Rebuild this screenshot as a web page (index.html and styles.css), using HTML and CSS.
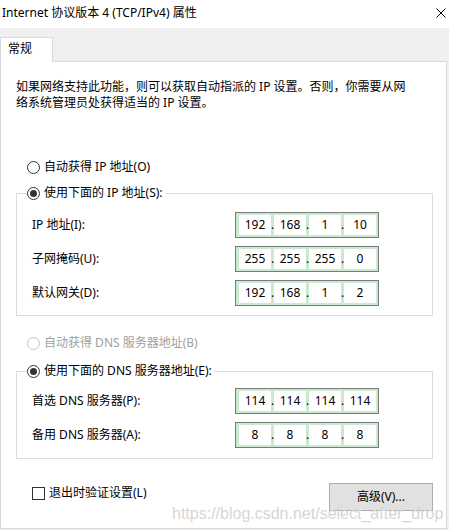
FILE: index.html
```html
<!DOCTYPE html>
<html lang="zh-CN">

<head>
    <meta charset="UTF-8" />
    <meta name="viewport" content="width=device-width, initial-scale=1.0" />
    <title>Internet 协议版本 4 (TCP/IPv4) 属性</title>
    <link rel="stylesheet" href="styles.css">
</head>

<body>
    <!-- 标题栏 -->
    <div class="titlebar">
        <span class="title">Internet 协议版本 4 (TCP/IPv4) 属性</span>
        <svg class="close" width="10" height="10" viewBox="0 0 10 10">
            <path d="M0.5 0.5 L9.5 9.5 M9.5 0.5 L0.5 9.5" stroke="#000" stroke-width="1" fill="none" />
        </svg>
    </div>

    <!-- 选项卡 -->
    <div class="tabs">
        <div class="tab">常规</div>
    </div>

    <div class="panel">
        <p class="desc">如果网络支持此功能，则可以获取自动指派的 IP 设置。否则，你需要从网<br>络系统管理员处获得适当的 IP 设置。</p>

        <div class="option option-top"><span class="radio"></span>自动获得 IP 地址(O)</div>

        <!-- IP 地址 -->
        <fieldset class="group group-ip">
            <legend class="option"><span class="radio checked"></span>使用下面的 IP 地址(S):</legend>
            <div class="field">
                <span class="field-label">IP 地址(I):</span>
                <div class="ip"><span class="octet">192</span><span class="dot">.</span><span class="octet">168</span><span class="dot">.</span><span class="octet">1</span><span class="dot">.</span><span class="octet">10</span></div>
            </div>
            <div class="field">
                <span class="field-label">子网掩码(U):</span>
                <div class="ip"><span class="octet">255</span><span class="dot">.</span><span class="octet">255</span><span class="dot">.</span><span class="octet">255</span><span class="dot">.</span><span class="octet">0</span></div>
            </div>
            <div class="field">
                <span class="field-label">默认网关(D):</span>
                <div class="ip"><span class="octet">192</span><span class="dot">.</span><span class="octet">168</span><span class="dot">.</span><span class="octet">1</span><span class="dot">.</span><span class="octet">2</span></div>
            </div>
        </fieldset>

        <div class="option option-disabled"><span class="radio"></span>自动获得 DNS 服务器地址(B)</div>

        <!-- DNS -->
        <fieldset class="group group-dns">
            <legend class="option"><span class="radio checked"></span>使用下面的 DNS 服务器地址(E):</legend>
            <div class="field">
                <span class="field-label">首选 DNS 服务器(P):</span>
                <div class="ip"><span class="octet">114</span><span class="dot">.</span><span class="octet">114</span><span class="dot">.</span><span class="octet">114</span><span class="dot">.</span><span class="octet">114</span></div>
            </div>
            <div class="field">
                <span class="field-label">备用 DNS 服务器(A):</span>
                <div class="ip"><span class="octet">8</span><span class="dot">.</span><span class="octet">8</span><span class="dot">.</span><span class="octet">8</span><span class="dot">.</span><span class="octet">8</span></div>
            </div>
        </fieldset>

        <div class="footer">
            <label class="check"><span class="box"></span>退出时验证设置(L)</label>
            <button class="btn">高级(V)...</button>
        </div>

        <div class="watermark">https://blog.csdn.net/select_after_drop</div>
    </div>
</body>

</html>
```

FILE: styles.css
```css
* {
    box-sizing: border-box;
}

body {
    margin: 0;
    width: 449px;
    height: 530px;
    overflow: hidden;
    background-color: #f0f0f0;
    font-family: "Noto Sans", "Noto Sans CJK SC", sans-serif;
    font-size: 12px;
    line-height: 16px;
    color: #000;
}

/* 标题栏 */
.titlebar {
    height: 28px;
    background-color: #fff;
    display: flex;
    justify-content: space-between;
    align-items: center;
    padding: 0 3px 2px 2px;
}

/* 选项卡 */
.tabs {
    height: 33px;
    display: flex;
    align-items: flex-end;
}

.tab {
    position: relative;
    z-index: 1;
    width: 53px;
    height: 25px;
    margin-bottom: -1px;
    padding-left: 7px;
    line-height: 22px;
    background-color: #fff;
    border: 1px solid #d9d9d9;
    border-bottom: none;
}

/* 主面板 */
.panel {
    position: relative;
    width: 447px;
    height: 468px;
    padding: 17px 0 0 15px;
    background-color: #fff;
    border: 1px solid #d9d9d9;
}

.desc {
    margin: 0;
}

/* 单选项 */
.option {
    display: flex;
    align-items: center;
    gap: 4px;
    height: 16px;
    white-space: nowrap;
}

.option-top {
    margin: 48px 0 0 11px;
}

.option-disabled {
    margin: 19px 0 0 11px;
    color: #a0a0a0;
}

.radio {
    width: 13px;
    height: 13px;
    border: 1px solid #333;
    border-radius: 50%;
    background-color: #fff;
    display: flex;
    justify-content: center;
    align-items: center;
}

.radio.checked::after {
    content: "";
    width: 7px;
    height: 7px;
    border-radius: 50%;
    background-color: #333;
}

.option-disabled .radio {
    border-color: #c4c4c4;
}

/* 分组框 */
.group {
    width: 417px;
    min-width: 0;
    margin: 10px 0 0 0;
    border: 1px solid #dcdcdc;
}

.group legend {
    padding: 0 2px 0 0;
}

.group-ip {
    padding: 11px 0 9px 10px;
}

.group-dns {
    margin-top: 12px;
    padding: 9px 0 10px 10px;
}

.field {
    display: flex;
    align-items: center;
    height: 26px;
    padding-left: 5px;
}

.field + .field {
    margin-top: 8px;
}

.field-label {
    width: 203px;
}

/* IP 输入框 */
.ip {
    display: flex;
    width: 144px;
    height: 26px;
    padding: 2px 2px 2px 3px;
    border: 1px solid #7a7a7a;
    background-color: #c9eacf;
}

.octet {
    width: 32px;
    line-height: 20px;
    text-align: center;
    background-color: #fff;
}

.dot {
    width: 3px;
    line-height: 20px;
    text-align: center;
    overflow: visible;
}

/* 底部 */
.footer {
    width: 417px;
    margin-top: 24px;
    padding-left: 16px;
    display: flex;
    justify-content: space-between;
    align-items: flex-start;
}

.check {
    display: flex;
    align-items: center;
    gap: 4px;
    margin-top: 2px;
}

.box {
    width: 13px;
    height: 13px;
    border: 1px solid #333;
    background-color: #fff;
}

.btn {
    width: 104px;
    height: 28px;
    font: inherit;
    color: #000;
    background-color: #e1e1e1;
    border: 1px solid #adadad;
}

/* 水印 */
.watermark {
    position: absolute;
    left: 171px;
    top: 442px;
    font-family: "Liberation Sans", sans-serif;
    font-size: 16px;
    line-height: 20px;
    color: #d6d6d6;
    white-space: nowrap;
}
```
